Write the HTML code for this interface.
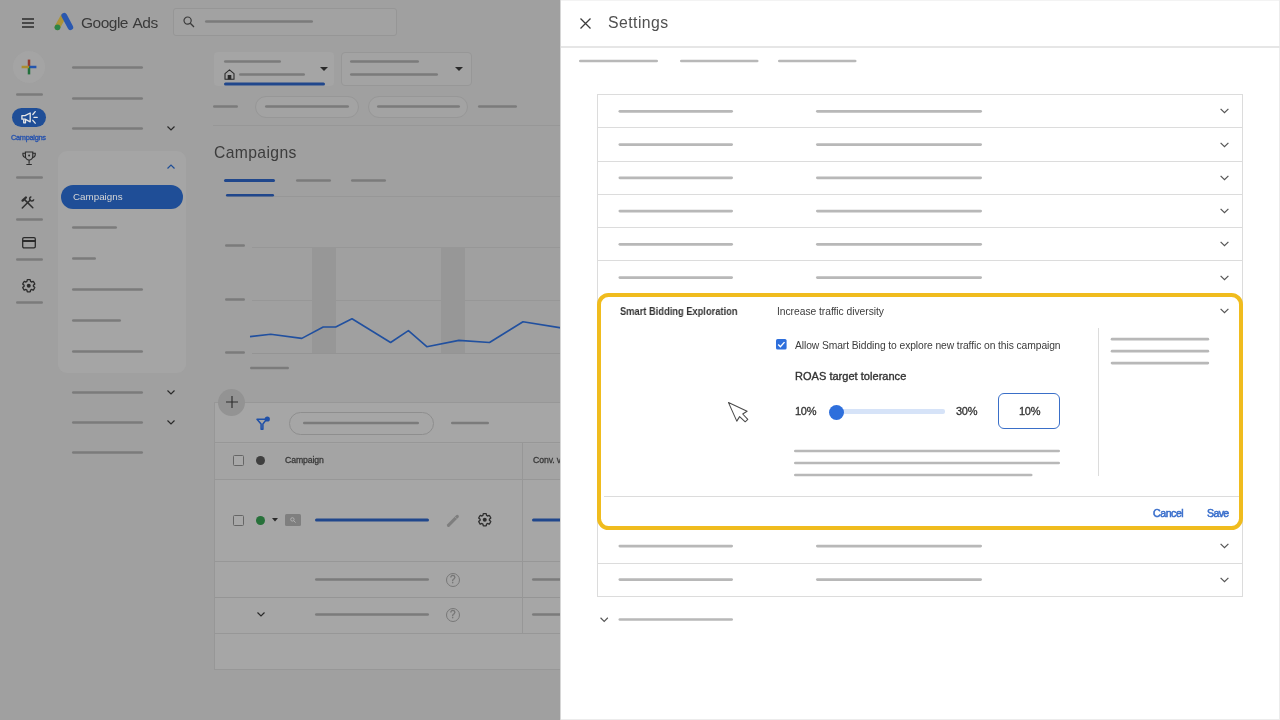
<!DOCTYPE html>
<html><head><meta charset="utf-8"><title>Settings</title>
<style>
*{box-sizing:border-box;margin:0;padding:0}
html,body{width:1280px;height:720px;overflow:hidden;background:#a0a0a0;font-family:"Liberation Sans",sans-serif}
.a{position:absolute}
.l{position:absolute;height:2.6px;margin-top:.1px;border-radius:1.3px;background:#7b7b7b}
.lb{position:absolute;height:3px;border-radius:1.5px;background:#20478c}
.r{position:absolute;height:2.7px;margin-top:.15px;border-radius:1.4px;background:#b8b8b8}
svg{position:absolute;overflow:visible}
#left{position:absolute;left:0;top:0;width:560px;height:720px;background:#a0a0a0;overflow:hidden}
#panel{position:absolute;left:560px;top:0;width:720px;height:720px;background:#fff;border-left:1px solid #d6d6d6;box-shadow:inset -1px -1px 0 #ececec,inset 0 1px 0 #f3f3f3}
.t{position:absolute;white-space:nowrap;line-height:1;will-change:transform}
</style></head><body>
<div id="left">
<!--LEFT-->
<!-- top bar -->
<svg style="left:22px;top:17.6px" width="12" height="10" viewBox="0 0 12 10"><path d="M0 1h12M0 5h12M0 9h12" stroke="#2b2b2b" stroke-width="1.6"/></svg>
<svg style="left:54px;top:12px" width="20" height="19" viewBox="0 0 20 19"><path d="M3.4 15.2 L9.2 4.6" stroke="#ac9338" stroke-width="5.6" stroke-linecap="round"/><path d="M10.2 3.6 L16.4 15.2" stroke="#2a58b0" stroke-width="5.6" stroke-linecap="round"/><circle cx="3.5" cy="15.3" r="2.9" fill="#2c8447"/></svg>
<div class="t" style="left:81px;top:14.5px;font-size:15.5px;color:#3a3a3a;letter-spacing:-0.5px;word-spacing:1.6px">Google Ads</div>
<div class="a" style="left:173px;top:8px;width:224px;height:28px;border:1px solid #969696;border-radius:3px;background:#a2a2a2"></div>
<svg style="left:183px;top:16px" width="12" height="12" viewBox="0 0 12 12"><circle cx="4.6" cy="4.6" r="3.6" fill="none" stroke="#3a3a3a" stroke-width="1.2"/><path d="M7.3 7.3L11 11" stroke="#3a3a3a" stroke-width="1.3"/></svg>

<!-- icon rail -->
<div class="a" style="left:13px;top:51px;width:32px;height:32px;border-radius:50%;background:#a4a4a4"></div>
<svg style="left:21.2px;top:59px" width="16" height="16" viewBox="0 0 16 16"><path d="M8 0.6V8" stroke="#94392c" stroke-width="2.5"/><path d="M8 8H15.4" stroke="#2455ae" stroke-width="2.5"/><path d="M8 8V15.4" stroke="#23703c" stroke-width="2.5"/><path d="M0.6 8H8" stroke="#ab8d2e" stroke-width="2.5"/></svg>
<div class="a" style="left:12px;top:108px;width:34px;height:19px;border-radius:10px;background:#1f4e97"></div>
<svg style="left:20px;top:109.5px" width="18" height="15" viewBox="0 0 18 15"><g fill="none" stroke="#e8e8e8" stroke-width="1.3" stroke-linejoin="round"><path d="M1.9 5.6h3.1l5.2-2.6v8.8l-5.2-2.6H1.9z"/><path d="M3.7 9.4v3.4h1.8V9.4"/><path d="M12.8 4.5l2.4-2.9M14 7.4h3.2M12.8 10.3l2.4 2.9" stroke-linecap="round"/></g></svg>
<div class="t" style="left:10.5px;top:133.8px;font-size:7.4px;color:#2753ad;-webkit-text-stroke:0.35px #2753ad;letter-spacing:-0.3px">Campaigns</div>
<svg style="left:22.2px;top:151.2px" width="14.2" height="15.2" viewBox="0 0 15 16"><g fill="none" stroke="#2b2b2b" stroke-width="1.2"><path d="M3.6 1h7.8v4.6a3.9 3.9 0 0 1-7.8 0z"/><path d="M3.6 2.4H1v1.6a2.8 2.8 0 0 0 2.8 2.8M11.4 2.4H14v1.6a2.8 2.8 0 0 1-2.8 2.8"/><path d="M7.5 9.5v4M4.6 14.2h5.8"/></g><circle cx="7.5" cy="4.8" r="1" fill="#2b2b2b"/></svg>
<svg style="left:21px;top:196px" width="14" height="14" viewBox="0 0 14 14"><g fill="none" stroke="#303030"><path d="M1.3 12L9.3 4" stroke-width="1.5" stroke-linecap="round"/><path d="M11.8 11.8L3.6 3.6" stroke-width="1.5" stroke-linecap="round"/><path d="M1.6 4.6L4.9 1.5" stroke-width="2.4" stroke-linecap="round"/><path d="M10.34 0.83A2.1 2.1 0 1 0 12.77 3.26" stroke-width="1.5"/></g></svg>
<svg style="left:22px;top:237px" width="14" height="12" viewBox="0 0 14 12"><rect x="0.7" y="0.7" width="12.6" height="10.2" rx="1.3" fill="none" stroke="#2b2b2b" stroke-width="1.3"/><path d="M0.7 4h12.6" stroke="#2b2b2b" stroke-width="2"/></svg>
<svg style="left:21.25px;top:278px" width="15.5" height="15.5" viewBox="0 0 24 24"><path fill="none" stroke="#2b2b2b" stroke-width="2" stroke-linejoin="round" d="M19.14,12.94c0.04-0.3,0.06-0.61,0.06-0.94c0-0.32-0.02-0.64-0.07-0.94l2.03-1.58c0.18-0.14,0.23-0.41,0.12-0.61l-1.92-3.32c-0.12-0.22-0.37-0.29-0.59-0.22l-2.39,0.96c-0.5-0.38-1.03-0.7-1.62-0.94L14.4,2.81c-0.04-0.24-0.24-0.41-0.48-0.41h-3.84c-0.24,0-0.43,0.17-0.47,0.41L9.25,5.35C8.66,5.59,8.12,5.92,7.63,6.29L5.24,5.33c-0.22-0.08-0.47,0-0.59,0.22L2.74,8.87C2.62,9.08,2.66,9.34,2.86,9.48l2.03,1.58C4.84,11.36,4.8,11.69,4.8,12s0.02,0.64,0.07,0.94l-2.03,1.58c-0.18,0.14-0.23,0.41-0.12,0.61l1.92,3.32c0.12,0.22,0.37,0.29,0.59,0.22l2.39-0.96c0.5,0.38,1.03,0.7,1.62,0.94l0.36,2.54c0.05,0.24,0.24,0.41,0.48,0.41h3.84c0.24,0,0.44-0.17,0.47-0.41l0.36-2.54c0.59-0.24,1.13-0.56,1.62-0.94l2.39,0.96c0.22,0.08,0.47,0,0.59-0.22l1.92-3.32c0.12-0.22,0.07-0.47-0.12-0.61L19.14,12.94z"/><circle cx="12" cy="12" r="3.1" fill="#2b2b2b"/></svg>

<!-- nav column -->
<svg style="left:167px;top:126px" width="8" height="5" viewBox="0 0 8 5"><path d="M0.5 0.5L4 4L7.5 0.5" fill="none" stroke="#2a2a2a" stroke-width="1.2"/></svg>
<div class="a" style="left:58px;top:150.5px;width:128px;height:222px;border-radius:9px;background:#a5a5a5"></div>
<svg style="left:167px;top:164px" width="8" height="5" viewBox="0 0 8 5"><path d="M0.5 4.5L4 1L7.5 4.5" fill="none" stroke="#1f4e97" stroke-width="1.2"/></svg>
<div class="a" style="left:61px;top:185px;width:122px;height:24px;border-radius:12px;background:#1f4e97"></div>
<div class="t" style="left:73px;top:192.3px;font-size:9.8px;color:#d6d6d6">Campaigns</div>
<svg style="left:167px;top:390px" width="8" height="5" viewBox="0 0 8 5"><path d="M0.5 0.5L4 4L7.5 0.5" fill="none" stroke="#2a2a2a" stroke-width="1.2"/></svg>
<svg style="left:167px;top:420px" width="8" height="5" viewBox="0 0 8 5"><path d="M0.5 0.5L4 4L7.5 0.5" fill="none" stroke="#2a2a2a" stroke-width="1.2"/></svg>

<!-- main: dropdowns -->
<div class="a" style="left:214px;top:52px;width:120px;height:34px;border-radius:4px;background:#a5a5a5"></div>
<svg style="left:224px;top:69px" width="11" height="11" viewBox="0 0 11 11"><path d="M1 10.3V4.6L5.5 0.9L10 4.6V10.3z" fill="none" stroke="#2a2a2a" stroke-width="1.1" stroke-linejoin="round"/><rect x="3.7" y="6" width="3.6" height="4.3" fill="#2a2a2a"/></svg>
<svg style="left:320px;top:66.5px" width="8" height="4" viewBox="0 0 8 4"><path d="M0 0h8L4 4z" fill="#2a2a2a"/></svg>
<div class="a" style="left:341px;top:52px;width:131px;height:34px;border-radius:4px;border:1px solid #979797;background:#a3a3a3"></div>
<svg style="left:454.5px;top:66.5px" width="8" height="4" viewBox="0 0 8 4"><path d="M0 0h8L4 4z" fill="#2a2a2a"/></svg>
<!-- chips row -->
<div class="a" style="left:255px;top:96px;width:104px;height:22px;border-radius:11px;border:1px solid #979797;background:#a3a3a3"></div>
<div class="a" style="left:368px;top:96px;width:100px;height:22px;border-radius:11px;border:1px solid #979797;background:#a3a3a3"></div>
<div class="a" style="left:213px;top:125px;width:347px;height:1px;background:#979797"></div>
<!-- heading -->
<div class="t" style="left:213.8px;top:144.9px;font-size:15.7px;color:#3c3c3c;letter-spacing:0.38px">Campaigns</div>
<div class="a" style="left:226px;top:196.4px;width:334px;height:1px;background:#979797"></div>
<!-- chart -->
<div class="a" style="left:312px;top:247px;width:24px;height:106px;background:#979797"></div>
<div class="a" style="left:441px;top:247px;width:24px;height:106px;background:#979797"></div>
<div class="a" style="left:252px;top:246.5px;width:308px;height:1px;background:#979797"></div>
<div class="a" style="left:252px;top:300px;width:308px;height:1px;background:#979797"></div>
<div class="a" style="left:252px;top:353px;width:308px;height:1px;background:#949494"></div>
<svg style="left:0;top:0" width="560" height="720" viewBox="0 0 560 720"><polyline fill="none" stroke="#21509f" stroke-width="1.6" stroke-linejoin="round" points="250,336.6 270.7,334.2 301.8,338.4 323.2,327 335.7,327 352,318.8 390.6,342.5 408.4,330.6 426.8,346.7 458.9,340.4 489.5,342.5 523,321.7 561,327.9"/></svg>
<!-- table card -->
<div class="a" style="left:214px;top:402px;width:360px;height:268px;border:1px solid #979797;background:#a6a6a6"></div>
<div class="a" style="left:218px;top:388.5px;width:27px;height:27px;border-radius:50%;background:#939393"></div>
<svg style="left:225.5px;top:396px" width="12" height="12" viewBox="0 0 12 12"><path d="M6 0v12M0 6h12" stroke="#2e2e2e" stroke-width="1.15"/></svg>
<svg style="left:256px;top:416px" width="15" height="15" viewBox="0 0 15 15"><path d="M1 3.2h9.6L6.9 8v5.2H5.1V8z" fill="none" stroke="#1f50a8" stroke-width="1.5" stroke-linejoin="round"/><circle cx="11.3" cy="3" r="2.6" fill="#1f50a8"/></svg>
<div class="a" style="left:288.5px;top:412px;width:145px;height:23px;border-radius:12px;border:1px solid #8e8e8e"></div>
<div class="a" style="left:215px;top:442.4px;width:345px;height:1px;background:#979797"></div>
<div class="a" style="left:215px;top:444px;width:345px;height:35px;background:#a4a4a4"></div>
<div class="a" style="left:215px;top:478.5px;width:345px;height:1px;background:#979797"></div>
<div class="a" style="left:215px;top:561px;width:345px;height:1px;background:#979797"></div>
<div class="a" style="left:215px;top:597px;width:345px;height:1px;background:#959595"></div>
<div class="a" style="left:215px;top:633px;width:345px;height:1px;background:#979797"></div>
<div class="a" style="left:522px;top:443px;width:1px;height:190px;background:#979797"></div>
<!-- header row -->
<div class="a" style="left:233px;top:454.8px;width:11px;height:11px;border:1.2px solid #666;border-radius:1.5px;background:#a8a8a8"></div>
<div class="a" style="left:256px;top:455.8px;width:9px;height:9px;border-radius:50%;background:#3f3f3f"></div>
<div class="t" style="left:285px;top:455.8px;font-size:8.7px;color:#3a3a3a;-webkit-text-stroke:0.3px #3a3a3a;letter-spacing:-0.1px">Campaign</div>
<div class="t" style="left:533px;top:455.8px;font-size:8.7px;color:#3a3a3a;-webkit-text-stroke:0.3px #3a3a3a;letter-spacing:-0.1px">Conv. value</div>
<!-- row 1 -->
<div class="a" style="left:233px;top:514.5px;width:11px;height:11px;border:1.2px solid #666;border-radius:1.5px;background:#a8a8a8"></div>
<div class="a" style="left:256px;top:515.5px;width:9px;height:9px;border-radius:50%;background:#27713a"></div>
<svg style="left:271.5px;top:518px" width="6" height="4" viewBox="0 0 6 4"><path d="M0 0h6L3 3.6z" fill="#2a2a2a"/></svg>
<div class="a" style="left:285px;top:514px;width:16px;height:12px;border-radius:1.5px;background:#7f7f7f"></div>
<svg style="left:290px;top:517px" width="6" height="6" viewBox="0 0 6 6"><circle cx="2.4" cy="2.4" r="1.7" fill="none" stroke="#b4b4b4" stroke-width="0.9"/><path d="M3.7 3.7L5.6 5.6" stroke="#b4b4b4" stroke-width="0.9"/></svg>
<svg style="left:446px;top:514px" width="13" height="13" viewBox="0 0 13 13"><path d="M2.45 11.3L11.3 2.45" stroke="#7e7e7e" stroke-width="3.1" stroke-linecap="round"/><path d="M9.3 3.2l1.3 1.3" stroke="#a6a6a6" stroke-width="0.8"/></svg>
<svg style="left:477.25px;top:512.15px" width="15.5" height="15.5" viewBox="0 0 24 24"><path fill="none" stroke="#2e2e2e" stroke-width="2" stroke-linejoin="round" d="M19.14,12.94c0.04-0.3,0.06-0.61,0.06-0.94c0-0.32-0.02-0.64-0.07-0.94l2.03-1.58c0.18-0.14,0.23-0.41,0.12-0.61l-1.92-3.32c-0.12-0.22-0.37-0.29-0.59-0.22l-2.39,0.96c-0.5-0.38-1.03-0.7-1.62-0.94L14.4,2.81c-0.04-0.24-0.24-0.41-0.48-0.41h-3.84c-0.24,0-0.43,0.17-0.47,0.41L9.25,5.35C8.66,5.59,8.12,5.92,7.63,6.29L5.24,5.33c-0.22-0.08-0.47,0-0.59,0.22L2.74,8.87C2.62,9.08,2.66,9.34,2.86,9.48l2.03,1.58C4.84,11.36,4.8,11.69,4.8,12s0.02,0.64,0.07,0.94l-2.03,1.58c-0.18,0.14-0.23,0.41-0.12,0.61l1.92,3.32c0.12,0.22,0.37,0.29,0.59,0.22l2.39-0.96c0.5,0.38,1.03,0.7,1.62,0.94l0.36,2.54c0.05,0.24,0.24,0.41,0.48,0.41h3.84c0.24,0,0.44-0.17,0.47-0.41l0.36-2.54c0.59-0.24,1.13-0.56,1.62-0.94l2.39,0.96c0.22,0.08,0.47,0,0.59-0.22l1.92-3.32c0.12-0.22,0.07-0.47-0.12-0.61L19.14,12.94z"/><circle cx="12" cy="12" r="3.1" fill="#2e2e2e"/></svg>
<!-- row 2 -->
<div class="a" style="left:446px;top:573px;width:14px;height:14px;border-radius:50%;border:1.4px solid #787878"></div>
<div class="t" style="left:449.8px;top:575.4px;font-size:10px;color:#747474;-webkit-text-stroke:0.3px #747474">?</div>
<!-- row 3 -->
<svg style="left:257px;top:612px" width="8" height="5" viewBox="0 0 8 5"><path d="M0.5 0.5L4 4L7.5 0.5" fill="none" stroke="#2a2a2a" stroke-width="1.2"/></svg>
<div class="a" style="left:446px;top:607.5px;width:14px;height:14px;border-radius:50%;border:1.4px solid #787878"></div>
<div class="t" style="left:449.8px;top:609.9px;font-size:10px;color:#747474;-webkit-text-stroke:0.3px #747474">?</div>
<svg style="left:0;top:0" width="560" height="720" viewBox="0 0 560 720" stroke-linecap="round">
<line x1="206.35" y1="21.50" x2="311.65" y2="21.50" stroke="#7b7b7b" stroke-width="2.7"/>
<line x1="17.35" y1="94.50" x2="41.65" y2="94.50" stroke="#7b7b7b" stroke-width="2.7"/>
<line x1="17.35" y1="177.50" x2="41.65" y2="177.50" stroke="#7b7b7b" stroke-width="2.7"/>
<line x1="17.35" y1="219.50" x2="41.65" y2="219.50" stroke="#7b7b7b" stroke-width="2.7"/>
<line x1="17.35" y1="259.50" x2="41.65" y2="259.50" stroke="#7b7b7b" stroke-width="2.7"/>
<line x1="17.35" y1="302.50" x2="41.65" y2="302.50" stroke="#7b7b7b" stroke-width="2.7"/>
<line x1="73.35" y1="67.50" x2="141.65" y2="67.50" stroke="#7b7b7b" stroke-width="2.7"/>
<line x1="73.35" y1="98.50" x2="141.65" y2="98.50" stroke="#7b7b7b" stroke-width="2.7"/>
<line x1="73.35" y1="128.50" x2="141.65" y2="128.50" stroke="#7b7b7b" stroke-width="2.7"/>
<line x1="73.35" y1="227.50" x2="115.65" y2="227.50" stroke="#7b7b7b" stroke-width="2.7"/>
<line x1="73.35" y1="258.50" x2="94.65" y2="258.50" stroke="#7b7b7b" stroke-width="2.7"/>
<line x1="73.35" y1="289.50" x2="141.65" y2="289.50" stroke="#7b7b7b" stroke-width="2.7"/>
<line x1="73.35" y1="320.50" x2="119.65" y2="320.50" stroke="#7b7b7b" stroke-width="2.7"/>
<line x1="73.35" y1="351.50" x2="141.65" y2="351.50" stroke="#7b7b7b" stroke-width="2.7"/>
<line x1="73.35" y1="392.50" x2="141.65" y2="392.50" stroke="#7b7b7b" stroke-width="2.7"/>
<line x1="73.35" y1="422.50" x2="141.65" y2="422.50" stroke="#7b7b7b" stroke-width="2.7"/>
<line x1="73.35" y1="452.50" x2="141.65" y2="452.50" stroke="#7b7b7b" stroke-width="2.7"/>
<line x1="225.35" y1="61.50" x2="279.65" y2="61.50" stroke="#7b7b7b" stroke-width="2.7"/>
<line x1="240.35" y1="74.50" x2="303.65" y2="74.50" stroke="#7b7b7b" stroke-width="2.7"/>
<line x1="225.50" y1="84.00" x2="323.50" y2="84.00" stroke="#20478c" stroke-width="3.0"/>
<line x1="351.35" y1="61.50" x2="417.65" y2="61.50" stroke="#7b7b7b" stroke-width="2.7"/>
<line x1="351.35" y1="74.50" x2="436.65" y2="74.50" stroke="#7b7b7b" stroke-width="2.7"/>
<line x1="214.35" y1="106.50" x2="236.65" y2="106.50" stroke="#7b7b7b" stroke-width="2.7"/>
<line x1="266.35" y1="106.50" x2="347.65" y2="106.50" stroke="#7b7b7b" stroke-width="2.7"/>
<line x1="378.35" y1="106.50" x2="458.65" y2="106.50" stroke="#7b7b7b" stroke-width="2.7"/>
<line x1="479.35" y1="106.50" x2="515.65" y2="106.50" stroke="#7b7b7b" stroke-width="2.7"/>
<line x1="225.50" y1="180.50" x2="273.50" y2="180.50" stroke="#20478c" stroke-width="3.0"/>
<line x1="297.35" y1="180.50" x2="329.65" y2="180.50" stroke="#7b7b7b" stroke-width="2.7"/>
<line x1="352.35" y1="180.50" x2="384.65" y2="180.50" stroke="#7b7b7b" stroke-width="2.7"/>
<line x1="227.30" y1="195.30" x2="272.70" y2="195.30" stroke="#20478c" stroke-width="2.6"/>
<line x1="226.35" y1="245.50" x2="243.65" y2="245.50" stroke="#7b7b7b" stroke-width="2.7"/>
<line x1="226.35" y1="299.50" x2="243.65" y2="299.50" stroke="#7b7b7b" stroke-width="2.7"/>
<line x1="226.35" y1="352.50" x2="243.65" y2="352.50" stroke="#7b7b7b" stroke-width="2.7"/>
<line x1="251.35" y1="368.00" x2="287.65" y2="368.00" stroke="#7b7b7b" stroke-width="2.7"/>
<line x1="304.35" y1="423.00" x2="417.65" y2="423.00" stroke="#7b7b7b" stroke-width="2.7"/>
<line x1="452.35" y1="423.00" x2="487.65" y2="423.00" stroke="#7b7b7b" stroke-width="2.7"/>
<line x1="316.50" y1="520.00" x2="427.50" y2="520.00" stroke="#20478c" stroke-width="3.0"/>
<line x1="533.50" y1="520.00" x2="570.50" y2="520.00" stroke="#20478c" stroke-width="3.0"/>
<line x1="316.35" y1="579.50" x2="427.65" y2="579.50" stroke="#7b7b7b" stroke-width="2.7"/>
<line x1="533.35" y1="579.50" x2="570.65" y2="579.50" stroke="#7b7b7b" stroke-width="2.7"/>
<line x1="316.35" y1="614.50" x2="427.65" y2="614.50" stroke="#7b7b7b" stroke-width="2.7"/>
<line x1="533.35" y1="614.50" x2="570.65" y2="614.50" stroke="#7b7b7b" stroke-width="2.7"/>
</svg>
<!--/LEFT-->
</div>
<div id="panel">
<!--PANEL-->
<svg style="left:19px;top:18px" width="11" height="11" viewBox="0 0 11 11"><path d="M0.5 0.5L10.5 10.5M10.5 0.5L0.5 10.5" stroke="#3c3c3c" stroke-width="1.3"/></svg>
<div class="t" style="left:46.5px;top:14.7px;font-size:15.8px;color:#505050;letter-spacing:0.45px">Settings</div>
<div class="a" style="left:0;top:46px;width:720px;height:1.5px;background:#e6e6e6"></div>
<div class="a" style="left:36px;top:94px;width:646px;height:503px;border:1px solid #dcdcdc"></div>
<svg style="left:659px;top:108.25px" width="9" height="6" viewBox="0 0 9 6"><path d="M0.6 0.8L4.5 4.7L8.4 0.8" fill="none" stroke="#555" stroke-width="1.2"/></svg>
<svg style="left:659px;top:141.5px" width="9" height="6" viewBox="0 0 9 6"><path d="M0.6 0.8L4.5 4.7L8.4 0.8" fill="none" stroke="#555" stroke-width="1.2"/></svg>
<div class="a" style="left:37px;top:127.25px;width:644px;height:1px;background:#dcdcdc"></div>
<svg style="left:659px;top:174.75px" width="9" height="6" viewBox="0 0 9 6"><path d="M0.6 0.8L4.5 4.7L8.4 0.8" fill="none" stroke="#555" stroke-width="1.2"/></svg>
<div class="a" style="left:37px;top:160.5px;width:644px;height:1px;background:#dcdcdc"></div>
<svg style="left:659px;top:208.0px" width="9" height="6" viewBox="0 0 9 6"><path d="M0.6 0.8L4.5 4.7L8.4 0.8" fill="none" stroke="#555" stroke-width="1.2"/></svg>
<div class="a" style="left:37px;top:193.75px;width:644px;height:1px;background:#dcdcdc"></div>
<svg style="left:659px;top:241.25px" width="9" height="6" viewBox="0 0 9 6"><path d="M0.6 0.8L4.5 4.7L8.4 0.8" fill="none" stroke="#555" stroke-width="1.2"/></svg>
<div class="a" style="left:37px;top:227.0px;width:644px;height:1px;background:#dcdcdc"></div>
<svg style="left:659px;top:274.5px" width="9" height="6" viewBox="0 0 9 6"><path d="M0.6 0.8L4.5 4.7L8.4 0.8" fill="none" stroke="#555" stroke-width="1.2"/></svg>
<div class="a" style="left:37px;top:260.25px;width:644px;height:1px;background:#dcdcdc"></div>
<svg style="left:659px;top:543.0px" width="9" height="6" viewBox="0 0 9 6"><path d="M0.6 0.8L4.5 4.7L8.4 0.8" fill="none" stroke="#555" stroke-width="1.2"/></svg>
<svg style="left:659px;top:576.5px" width="9" height="6" viewBox="0 0 9 6"><path d="M0.6 0.8L4.5 4.7L8.4 0.8" fill="none" stroke="#555" stroke-width="1.2"/></svg>
<div class="a" style="left:37px;top:563px;width:644px;height:1px;background:#dcdcdc"></div>
<div class="a" style="left:36.3px;top:293.2px;width:646px;height:236.7px;border:4.1px solid #f0bc1e;border-radius:11.5px;background:#fff"></div>
<div class="t" style="left:58.7px;top:306.8px;font-size:10.3px;font-weight:bold;color:#333;transform:scaleX(0.905);transform-origin:0 0">Smart Bidding Exploration</div>
<div class="t" style="left:215.5px;top:306.8px;font-size:10.3px;color:#3c3c3c;letter-spacing:-0.04px">Increase traffic diversity</div>
<svg style="left:659px;top:308.2px" width="9" height="6" viewBox="0 0 9 6"><path d="M0.6 0.8L4.5 4.7L8.4 0.8" fill="none" stroke="#555" stroke-width="1.2"/></svg>
<svg style="left:215.4px;top:339.3px" width="11" height="11" viewBox="0 0 11 11"><rect x="0" y="0" width="10.6" height="10.6" rx="1.6" fill="#2e6fdc"/><path d="M2.2 5.5L4.4 7.7L8.5 3.1" fill="none" stroke="#fff" stroke-width="1.4"/></svg>
<div class="t" style="left:233.8px;top:341.2px;font-size:10.3px;color:#3c3c3c;letter-spacing:-0.085px">Allow Smart Bidding to explore new traffic on this campaign</div>
<div class="t" style="left:233.8px;top:371px;font-size:11px;color:#333;-webkit-text-stroke:0.35px #333;letter-spacing:0.03px">ROAS target tolerance</div>
<div class="t" style="left:233.8px;top:406px;font-size:11px;color:#333;-webkit-text-stroke:0.3px #333;letter-spacing:-0.3px">10%</div>
<div class="a" style="left:275px;top:409.2px;width:109px;height:4.4px;border-radius:2px;background:#d6e3f8"></div>
<div class="a" style="left:267.5px;top:404.7px;width:15.2px;height:15.2px;border-radius:50%;background:#2e6fdc"></div>
<div class="t" style="left:394.9px;top:406px;font-size:11px;color:#333;-webkit-text-stroke:0.3px #333;letter-spacing:-0.3px">30%</div>
<div class="a" style="left:437.4px;top:393.4px;width:61.5px;height:36px;border:1.6px solid #3a6fc8;border-radius:6px"></div>
<div class="t" style="left:457.8px;top:406px;font-size:11px;color:#333;-webkit-text-stroke:0.3px #333;letter-spacing:-0.3px">10%</div>
<div class="a" style="left:537px;top:328px;width:1px;height:148px;background:#dcdcdc"></div>
<div class="a" style="left:43px;top:496px;width:635px;height:1px;background:#dcdcdc"></div>
<div class="t" style="left:591.6px;top:507.8px;font-size:10.6px;color:#3a6fcc;-webkit-text-stroke:0.55px #3a6fcc;letter-spacing:-0.45px">Cancel</div>
<div class="t" style="left:645.6px;top:507.8px;font-size:10.6px;color:#3a6fcc;-webkit-text-stroke:0.55px #3a6fcc;letter-spacing:-0.65px">Save</div>
<svg style="left:167px;top:402px" width="21" height="21" viewBox="0 0 21 21"><path d="M0.5 0.6L19.1 9.2L14.7 12L19.8 17.4L17.2 19.8L11.6 14.6L8.8 19.1z" fill="#fff" stroke="#4a4a4a" stroke-width="1.05" stroke-linejoin="round"/></svg>
<svg style="left:38.6px;top:617.2px" width="8.4" height="5.6" viewBox="0 0 9 6"><path d="M0.6 0.8L4.5 4.7L8.4 0.8" fill="none" stroke="#555" stroke-width="1.2"/></svg>
<svg style="left:0;top:0" width="719" height="720" viewBox="0 0 719 720" stroke-linecap="round">
<line x1="19.35" y1="61.00" x2="95.65" y2="61.00" stroke="#b8b8b8" stroke-width="2.7"/>
<line x1="120.35" y1="61.00" x2="196.15" y2="61.00" stroke="#b8b8b8" stroke-width="2.7"/>
<line x1="218.35" y1="61.00" x2="294.15" y2="61.00" stroke="#b8b8b8" stroke-width="2.7"/>
<line x1="58.85" y1="111.35" x2="170.65" y2="111.35" stroke="#b8b8b8" stroke-width="2.7"/>
<line x1="256.35" y1="111.35" x2="419.65" y2="111.35" stroke="#b8b8b8" stroke-width="2.7"/>
<line x1="58.85" y1="144.60" x2="170.65" y2="144.60" stroke="#b8b8b8" stroke-width="2.7"/>
<line x1="256.35" y1="144.60" x2="419.65" y2="144.60" stroke="#b8b8b8" stroke-width="2.7"/>
<line x1="58.85" y1="177.85" x2="170.65" y2="177.85" stroke="#b8b8b8" stroke-width="2.7"/>
<line x1="256.35" y1="177.85" x2="419.65" y2="177.85" stroke="#b8b8b8" stroke-width="2.7"/>
<line x1="58.85" y1="211.10" x2="170.65" y2="211.10" stroke="#b8b8b8" stroke-width="2.7"/>
<line x1="256.35" y1="211.10" x2="419.65" y2="211.10" stroke="#b8b8b8" stroke-width="2.7"/>
<line x1="58.85" y1="244.35" x2="170.65" y2="244.35" stroke="#b8b8b8" stroke-width="2.7"/>
<line x1="256.35" y1="244.35" x2="419.65" y2="244.35" stroke="#b8b8b8" stroke-width="2.7"/>
<line x1="58.85" y1="277.60" x2="170.65" y2="277.60" stroke="#b8b8b8" stroke-width="2.7"/>
<line x1="256.35" y1="277.60" x2="419.65" y2="277.60" stroke="#b8b8b8" stroke-width="2.7"/>
<line x1="58.85" y1="546.10" x2="170.65" y2="546.10" stroke="#b8b8b8" stroke-width="2.7"/>
<line x1="256.35" y1="546.10" x2="419.65" y2="546.10" stroke="#b8b8b8" stroke-width="2.7"/>
<line x1="58.85" y1="579.60" x2="170.65" y2="579.60" stroke="#b8b8b8" stroke-width="2.7"/>
<line x1="256.35" y1="579.60" x2="419.65" y2="579.60" stroke="#b8b8b8" stroke-width="2.7"/>
<line x1="551.05" y1="339.20" x2="646.85" y2="339.20" stroke="#b8b8b8" stroke-width="2.7"/>
<line x1="551.05" y1="351.20" x2="646.85" y2="351.20" stroke="#b8b8b8" stroke-width="2.7"/>
<line x1="551.05" y1="363.10" x2="646.85" y2="363.10" stroke="#b8b8b8" stroke-width="2.7"/>
<line x1="234.35" y1="451.00" x2="497.65" y2="451.00" stroke="#b8b8b8" stroke-width="2.7"/>
<line x1="234.35" y1="463.00" x2="497.65" y2="463.00" stroke="#b8b8b8" stroke-width="2.7"/>
<line x1="234.35" y1="475.00" x2="470.15" y2="475.00" stroke="#b8b8b8" stroke-width="2.7"/>
<line x1="58.85" y1="619.50" x2="170.65" y2="619.50" stroke="#b8b8b8" stroke-width="2.7"/>
</svg>
<!--/PANEL-->
</div>
</body></html>
